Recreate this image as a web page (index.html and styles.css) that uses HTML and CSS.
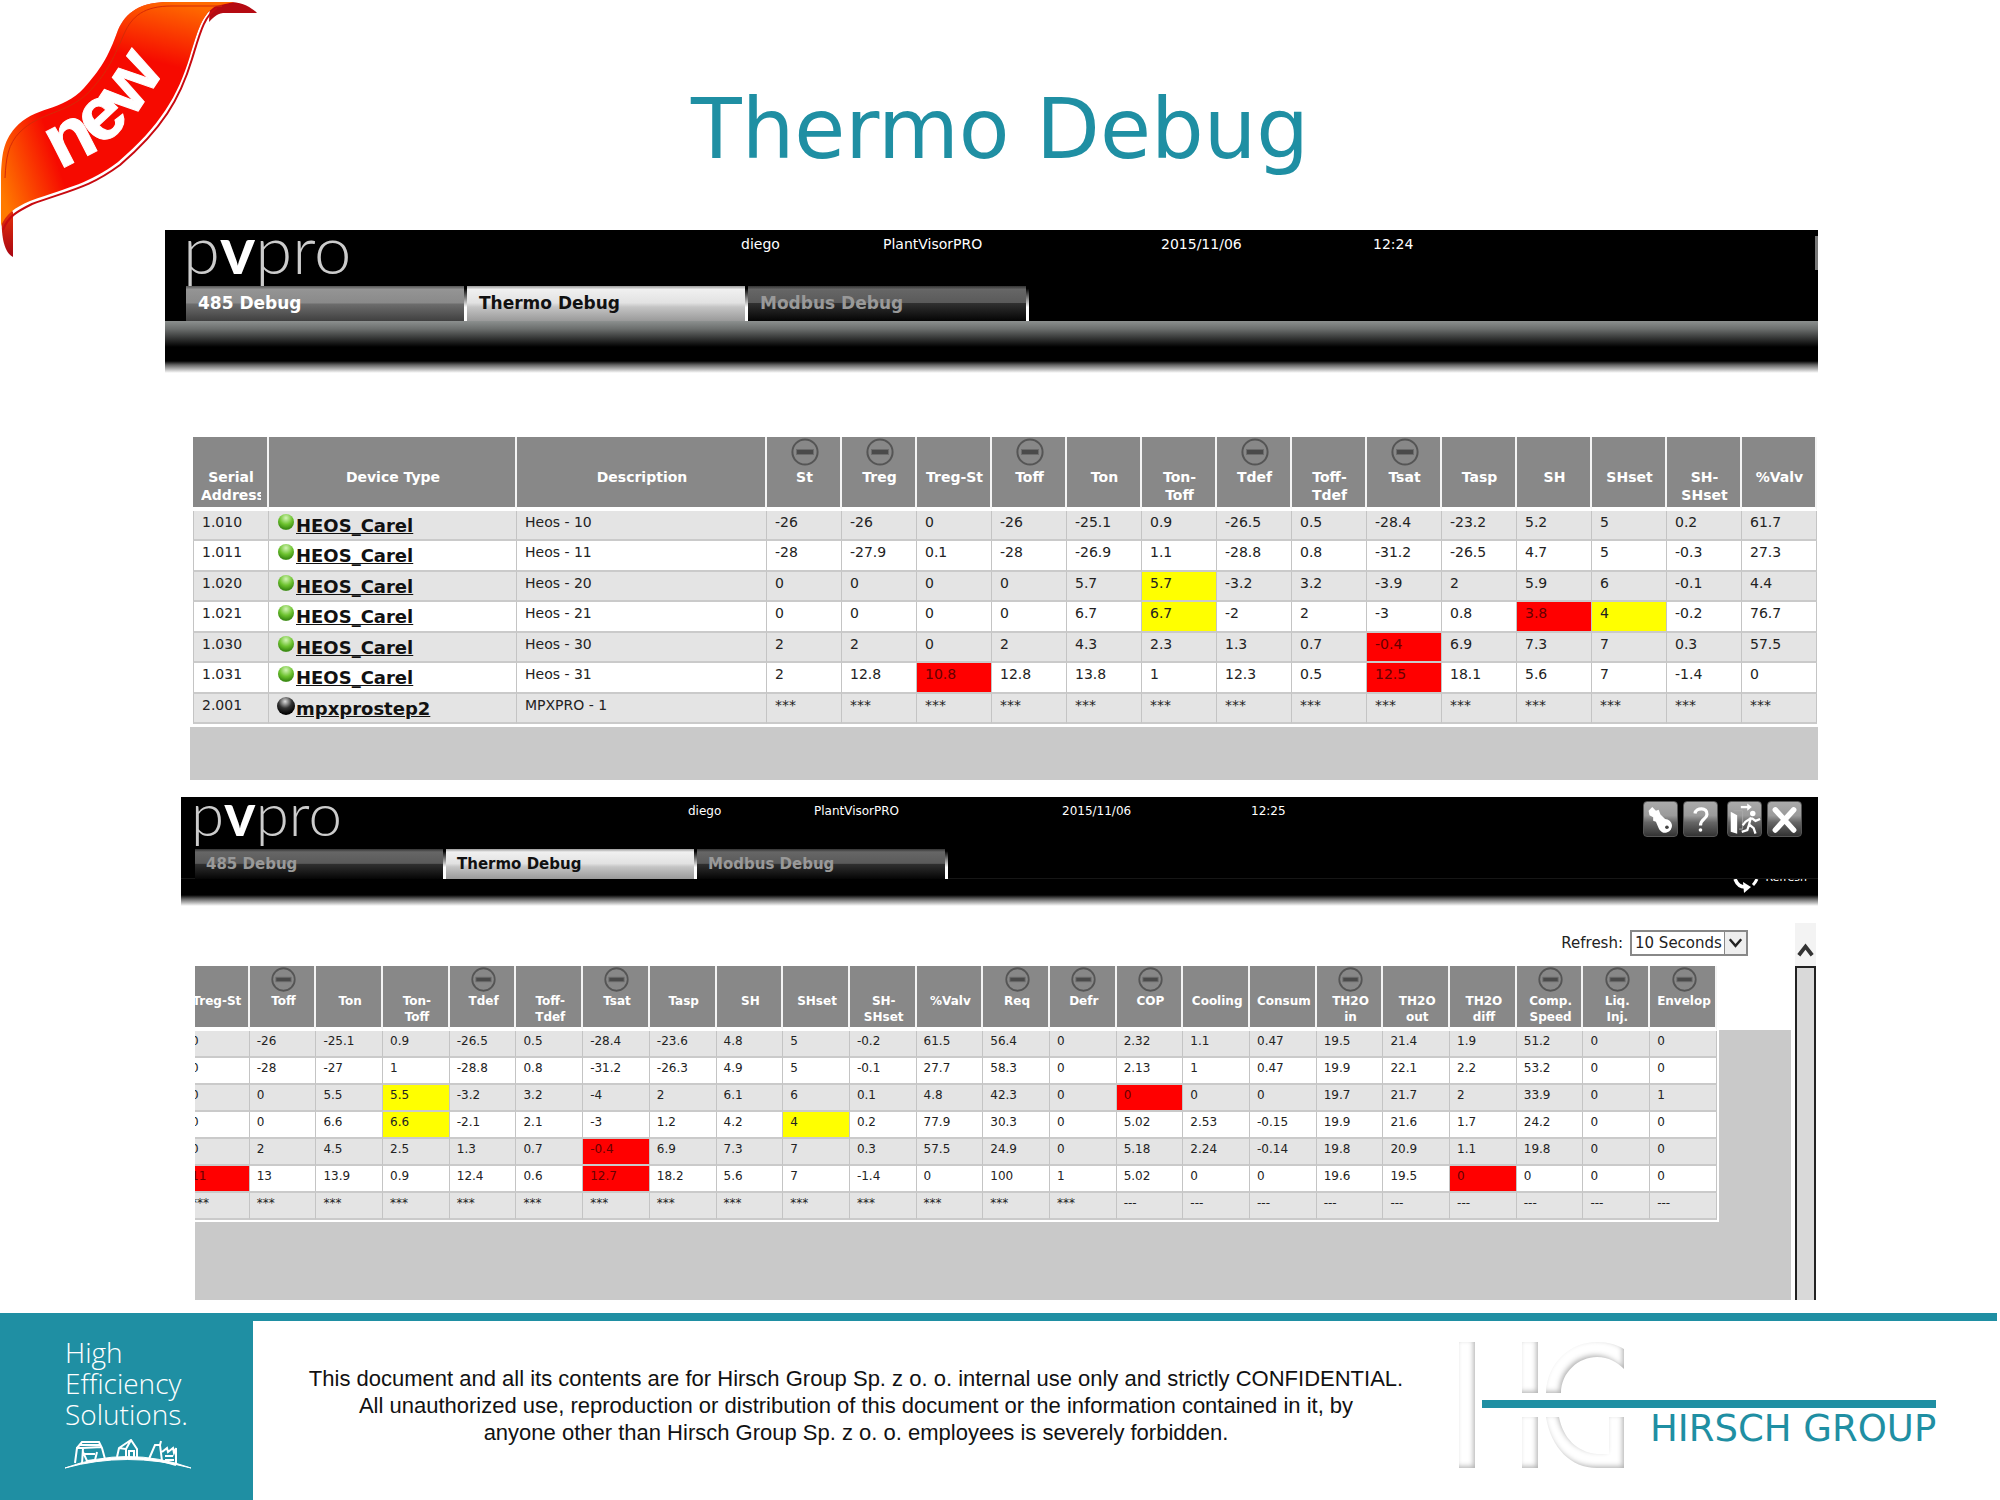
FILE: index.html
```html
<!DOCTYPE html>
<html lang="en">
<head>
<meta charset="utf-8">
<title>Thermo Debug</title>
<link rel="stylesheet" href="styles.css">
</head>
<body>
<svg class="defs" aria-hidden="true">
  <symbol id="minus" viewBox="0 0 28 28">
    <circle cx="14" cy="14" r="12.6" fill="none" stroke="#555" stroke-width="2"/>
    <rect x="5.500" y="11.500" width="17" height="5" fill="#4a4a4a" stroke="#6c6c6c"/>
  </symbol>
</svg>
<div class="slide">
  <svg class="ribbon" viewBox="0 0 260 260" role="img" aria-label="new">
    <defs>
      <linearGradient id="r1" gradientUnits="userSpaceOnUse" x1="0" y1="190" x2="60" y2="170">
        <stop offset="0" stop-color="#ff7a00"/><stop offset="1" stop-color="#f60a00"/>
      </linearGradient>
      <linearGradient id="r2" gradientUnits="userSpaceOnUse" x1="170" y1="0" x2="155" y2="62">
        <stop offset="0" stop-color="#ff6a00"/><stop offset="1" stop-color="#ff6a00" stop-opacity="0"/>
      </linearGradient>
      <linearGradient id="r3" x1="0" y1="0" x2="0" y2="1">
        <stop offset="0" stop-color="#f33a08"/><stop offset="1" stop-color="#a80612"/>
      </linearGradient>
    </defs>
    <path d="M2 200C0 238 4 252 13 257V212Z" fill="url(#r3)"/>
    <path d="M210 4L232 2C244 3 252 8 257 13H223C216 14 213 18 209 22Z" fill="#b50a12"/>
    <path d="M234 2L170 2C140 2 126 12 118 30C108 58 100 70 84 88C62 112 34 106 15 128C3 142 2 155 1 175V226C6 214 14 208 30 201C72 186 88 184 118 162C160 126 178 96 190 56C198 30 202 14 216 6Z" fill="url(#r1)"/>
    <path d="M234 2L170 2C140 2 126 12 118 30C108 58 100 70 84 88C62 112 34 106 15 128C3 142 2 155 1 175V226C6 214 14 208 30 201C72 186 88 184 118 162C160 126 178 96 190 56C198 30 202 14 216 6Z" fill="url(#r2)"/>
    <path d="M3 230C8 216 18 211 32 204C74 189 90 187 120 165C162 129 180 99 192 59C200 33 204 16 217 8" fill="none" stroke="#c80a10" stroke-width="2"/>
    <path d="M222 6H172C144 6 132 16 124 34C112 62 106 74 88 93C66 114 40 112 20 132C8 144 6 158 5 178" fill="none" stroke="#d62a06" stroke-width="1"/>
    <path id="curve" d="M59 168Q134 144 178 40" fill="none"/>
    <text class="ribbon-text"><textPath href="#curve">new</textPath></text>
  </svg>

  <h1>Thermo Debug</h1>

  <section class="app app-a">
    <header class="bar">
      <div class="bar-top">
        <div class="logo">p<b>v</b>pro</div>
        <span>diego</span><span>PlantVisorPRO</span><span>2015/11/06</span><span>12:24</span>
      </div>
      <nav class="tabs">
        <a href="#" class="tab hover">485 Debug</a>
        <a href="#" class="tab active">Thermo Debug</a>
        <a href="#" class="tab">Modbus Debug</a>
      </nav>
    </header>
    <div class="grid">
      <table>
        <colgroup><col class="c-serial"><col class="c-type"><col class="c-desc"><col span="14"></colgroup>
        <thead>
          <tr>
            <th><span>Serial<br>Address</span><th><span>Device Type</span><th><span>Description</span>
            <th class="c"><button aria-label="Hide St"><svg><use href="#minus"/></svg></button><span>St</span>
            <th class="c"><button aria-label="Hide Treg"><svg><use href="#minus"/></svg></button><span>Treg</span>
            <th><span>Treg-St</span>
            <th class="c"><button aria-label="Hide Toff"><svg><use href="#minus"/></svg></button><span>Toff</span>
            <th><span>Ton</span><th><span>Ton-<br>Toff</span>
            <th class="c"><button aria-label="Hide Tdef"><svg><use href="#minus"/></svg></button><span>Tdef</span>
            <th><span>Toff-<br>Tdef</span>
            <th class="c"><button aria-label="Hide Tsat"><svg><use href="#minus"/></svg></button><span>Tsat</span>
            <th><span>Tasp</span><th><span>SH</span><th><span>SHset</span><th><span>SH-<br>SHset</span><th><span>%Valv</span>
          </tr>
        </thead>
        <tbody>
          <tr><td>1.010<td class="dev"><i class="led"></i><a href="#">HEOS_Carel</a><td>Heos - 10<td>-26<td>-26<td>0<td>-26<td>-25.1<td>0.9<td>-26.5<td>0.5<td>-28.4<td>-23.2<td>5.2<td>5<td>0.2<td>61.7</tr>
          <tr><td>1.011<td class="dev"><i class="led"></i><a href="#">HEOS_Carel</a><td>Heos - 11<td>-28<td>-27.9<td>0.1<td>-28<td>-26.9<td>1.1<td>-28.8<td>0.8<td>-31.2<td>-26.5<td>4.7<td>5<td>-0.3<td>27.3</tr>
          <tr><td>1.020<td class="dev"><i class="led"></i><a href="#">HEOS_Carel</a><td>Heos - 20<td>0<td>0<td>0<td>0<td>5.7<td class="warn">5.7<td>-3.2<td>3.2<td>-3.9<td>2<td>5.9<td>6<td>-0.1<td>4.4</tr>
          <tr><td>1.021<td class="dev"><i class="led"></i><a href="#">HEOS_Carel</a><td>Heos - 21<td>0<td>0<td>0<td>0<td>6.7<td class="warn">6.7<td>-2<td>2<td>-3<td>0.8<td class="alarm">3.8<td class="warn">4<td>-0.2<td>76.7</tr>
          <tr><td>1.030<td class="dev"><i class="led"></i><a href="#">HEOS_Carel</a><td>Heos - 30<td>2<td>2<td>0<td>2<td>4.3<td>2.3<td>1.3<td>0.7<td class="alarm">-0.4<td>6.9<td>7.3<td>7<td>0.3<td>57.5</tr>
          <tr><td>1.031<td class="dev"><i class="led"></i><a href="#">HEOS_Carel</a><td>Heos - 31<td>2<td>12.8<td class="alarm">10.8<td>12.8<td>13.8<td>1<td>12.3<td>0.5<td class="alarm">12.5<td>18.1<td>5.6<td>7<td>-1.4<td>0</tr>
          <tr><td>2.001<td class="dev"><i class="led off"></i><a href="#">mpxprostep2</a><td>MPXPRO - 1<td>***<td>***<td>***<td>***<td>***<td>***<td>***<td>***<td>***<td>***<td>***<td>***<td>***<td>***</tr>
        </tbody>
      </table>
    </div>
  </section>

  <section class="app app-b">
    <header class="bar">
      <div class="bar-top">
        <div class="logo">p<b>v</b>pro</div>
        <span>diego</span><span>PlantVisorPRO</span><span>2015/11/06</span><span>12:25</span>
        <div class="tools">
          <button aria-label="Key"><svg viewBox="0 0 36 36"><path d="M5 9L9 5L13 9L16 8L18 13L23 18A7.500 7.500 0 1 1 16 28L13 21L10 20L10 16L6 14Z" fill="#fff"/><circle cx="25" cy="27" r="2" fill="#444"/></svg></button>
          <button aria-label="Help"><svg viewBox="0 0 36 36"><path d="M12 12C13 5 26 5 25 13C25 18 18 18 18 25" fill="none" stroke="#fff" stroke-width="3.500"/><circle cx="18" cy="30" r="2" fill="#fff"/></svg></button>
          <button class="exit" aria-label="Exit"><svg viewBox="0 0 36 36"><path d="M3 10L10 14V34L3 32Z" fill="#fff"/><path d="M6 9H16V29H12" fill="none" stroke="#aaa"/><path d="M14 5H23" stroke="#fff" stroke-width="2.500"/><path d="M21 1L26 5L21 9Z" fill="#fff"/><circle cx="27" cy="12" r="3" fill="#fff"/><path d="M25 16L23 24L28 28L30 34M23 24L21 30L15 32M25 17L19 21L16 25M26 17L30 20L35 18" fill="none" stroke="#fff" stroke-width="2.500"/></svg></button>
          <button aria-label="Close"><svg viewBox="0 0 36 36"><path d="M8 8L28 30M28 8L8 30" stroke="#fff" stroke-width="6" stroke-linecap="round"/></svg></button>
        </div>
      </div>
      <nav class="tabs">
        <a href="#" class="tab">485 Debug</a>
        <a href="#" class="tab active">Thermo Debug</a>
        <a href="#" class="tab">Modbus Debug</a>
      </nav>
      <button class="reload"><svg viewBox="0 0 26 14"><path d="M2 0C4 5 8 8 12 8" fill="none" stroke="#fff" stroke-width="3.500"/><path d="M10 3L18 8L11 14Z" fill="#fff"/><path d="M20 6C22 4 23 2 24 0" fill="none" stroke="#fff" stroke-width="3"/></svg><span>Refresh</span></button>
    </header>
    <div class="body">
      <div class="main">
        <div class="filter">
          <label for="rate">Refresh:</label>
          <div class="pick">
            <select id="rate"><option>10 Seconds</option></select>
            <svg viewBox="0 0 22 22" aria-hidden="true"><path d="M5 7L11 14L17 7" fill="none" stroke="#222" stroke-width="2.500"/></svg>
          </div>
        </div>
        <div class="grid">
          <table>
            <thead>
              <tr>
                <th><span>Treg-St</span>
                <th class="c"><button aria-label="Hide Toff"><svg><use href="#minus"/></svg></button><span>Toff</span>
                <th><span>Ton</span><th><span>Ton-<br>Toff</span>
                <th class="c"><button aria-label="Hide Tdef"><svg><use href="#minus"/></svg></button><span>Tdef</span>
                <th><span>Toff-<br>Tdef</span>
                <th class="c"><button aria-label="Hide Tsat"><svg><use href="#minus"/></svg></button><span>Tsat</span>
                <th><span>Tasp</span><th><span>SH</span><th><span>SHset</span><th><span>SH-<br>SHset</span><th><span>%Valv</span>
                <th class="c"><button aria-label="Hide Req"><svg><use href="#minus"/></svg></button><span>Req</span>
                <th class="c"><button aria-label="Hide Defr"><svg><use href="#minus"/></svg></button><span>Defr</span>
                <th class="c"><button aria-label="Hide COP"><svg><use href="#minus"/></svg></button><span>COP</span>
                <th><span>Cooling</span><th><span>Consum</span>
                <th class="c"><button aria-label="Hide TH2O in"><svg><use href="#minus"/></svg></button><span>TH2O<br>in</span>
                <th><span>TH2O<br>out</span><th><span>TH2O<br>diff</span>
                <th class="c"><button aria-label="Hide Comp. Speed"><svg><use href="#minus"/></svg></button><span>Comp.<br>Speed</span>
                <th class="c"><button aria-label="Hide Liq. Inj."><svg><use href="#minus"/></svg></button><span>Liq.<br>Inj.</span>
                <th class="c"><button aria-label="Hide Envelope"><svg><use href="#minus"/></svg></button><span>Envelope</span>
              </tr>
            </thead>
            <tbody>
              <tr><td>0<td>-26<td>-25.1<td>0.9<td>-26.5<td>0.5<td>-28.4<td>-23.6<td>4.8<td>5<td>-0.2<td>61.5<td>56.4<td>0<td>2.32<td>1.1<td>0.47<td>19.5<td>21.4<td>1.9<td>51.2<td>0<td>0</tr>
              <tr><td>0<td>-28<td>-27<td>1<td>-28.8<td>0.8<td>-31.2<td>-26.3<td>4.9<td>5<td>-0.1<td>27.7<td>58.3<td>0<td>2.13<td>1<td>0.47<td>19.9<td>22.1<td>2.2<td>53.2<td>0<td>0</tr>
              <tr><td>0<td>0<td>5.5<td class="warn">5.5<td>-3.2<td>3.2<td>-4<td>2<td>6.1<td>6<td>0.1<td>4.8<td>42.3<td>0<td class="alarm">0<td>0<td>0<td>19.7<td>21.7<td>2<td>33.9<td>0<td>1</tr>
              <tr><td>0<td>0<td>6.6<td class="warn">6.6<td>-2.1<td>2.1<td>-3<td>1.2<td>4.2<td class="warn">4<td>0.2<td>77.9<td>30.3<td>0<td>5.02<td>2.53<td>-0.15<td>19.9<td>21.6<td>1.7<td>24.2<td>0<td>0</tr>
              <tr><td>0<td>2<td>4.5<td>2.5<td>1.3<td>0.7<td class="alarm">-0.4<td>6.9<td>7.3<td>7<td>0.3<td>57.5<td>24.9<td>0<td>5.18<td>2.24<td>-0.14<td>19.8<td>20.9<td>1.1<td>19.8<td>0<td>0</tr>
              <tr><td class="alarm">11<td>13<td>13.9<td>0.9<td>12.4<td>0.6<td class="alarm">12.7<td>18.2<td>5.6<td>7<td>-1.4<td>0<td>100<td>1<td>5.02<td>0<td>0<td>19.6<td>19.5<td class="alarm">0<td>0<td>0<td>0</tr>
              <tr><td>***<td>***<td>***<td>***<td>***<td>***<td>***<td>***<td>***<td>***<td>***<td>***<td>***<td>***<td>---<td>---<td>---<td>---<td>---<td>---<td>---<td>---<td>---</tr>
            </tbody>
          </table>
        </div>
      </div>
      <div class="scroll">
        <button aria-label="Scroll up"><svg viewBox="0 0 22 22"><path d="M4 17L11 8L18 17" fill="none" stroke="#333" stroke-width="4"/></svg></button>
        <div class="thumb"></div>
      </div>
    </div>
  </section>

  <footer>
    <div class="brand">
      <p>High<br>Efficiency<br>Solutions.</p>
      <svg viewBox="0 0 126 30" aria-hidden="true">
        <g fill="none" stroke="#fff" stroke-width="2">
          <path d="M10 24L12 9L18 9L17 25M12 9L17 3L34 3L37 9L40 20M17 9L37 8M15 6H35M18 13L22 22L30 21L32 13M18 15H30"/>
          <path d="M52 18L54 9L66 1L72 10L72 19M54 9L61 10V18M61 10L66 1M64 18V12H69V18"/>
          <path d="M84 20L90 6H95L97 22M95 6L96 2M97 13L102 9L103 13L108 9L109 14L111 9V26M97 22L111 26M100 17H108M100 21H109"/>
        </g>
        <path d="M0 29Q62 6 126 29Q62 12 0 29Z" fill="#fff" stroke="#fff"/>
      </svg>
    </div>
    <p class="legal">This document and all its contents are for Hirsch Group Sp. z o. o. internal use only and strictly CONFIDENTIAL.<br>All unauthorized use, reproduction or distribution of this document or the information contained in it, by<br>anyone other than Hirsch Group Sp. z o. o. employees is severely forbidden.</p>
    <div class="group">
      <svg viewBox="0 0 480 130" aria-hidden="true">
        <filter id="emboss" x="-10%" y="-10%" width="120%" height="120%">
          <feFlood flood-color="#b4b4b4" result="f"/>
          <feComposite in="f" in2="SourceAlpha" operator="out" result="inv"/>
          <feGaussianBlur in="inv" stdDeviation="2.500" result="b"/>
          <feOffset in="b" dx="-2" dy="-2" result="o"/>
          <feComposite in="o" in2="SourceAlpha" operator="in" result="s"/>
          <feMerge><feMergeNode in="SourceGraphic"/><feMergeNode in="s"/></feMerge>
        </filter>
        <g filter="url(#emboss)" fill="#fff">
          <rect x="0" y="2" width="16" height="126"/>
          <rect x="63" y="2" width="16" height="51"/>
          <rect x="63" y="77" width="16" height="51"/>
          <path d="M87 53C88 22 112 2 138 2C150 2 158 5 165 9V29C158 22 150 17 138 17C120 17 102 32 102 53Z"/>
          <path d="M87 77C92 108 112 128 138 128H165V77H150V114H138C118 112 104 98 100 77Z"/>
        </g>
        <rect x="23" y="60" width="454" height="8" fill="#1f8fa3"/>
      </svg>
      <strong>HIRSCH GROUP</strong>
    </div>
  </footer>
</div>
</body>
</html>
```
FILE: styles.css
```css
* { box-sizing: border-box; }
body { margin: 0; background: #fff; font-family: "DejaVu Sans", Verdana, sans-serif; color: #222; }
button { padding: 0; border: 0; background: none; font: inherit; }
svg { display: block; }
.defs { position: absolute; width: 0; height: 0; }

.slide { position: relative; display: flex; flex-direction: column; min-height: 100vh; }
.ribbon { position: absolute; left: 0; top: 0; width: 260px; height: 260px; }
.ribbon-text { font: bold 76px "Liberation Sans", Arial, sans-serif; fill: #fff; stroke: #fff; stroke-width: 1px; }
h1 { margin: 0; height: 230px; padding-top: 82px; text-align: center; font-size: 83px; line-height: 96px; font-weight: 400; color: #1f8fa3; }

/* application windows */
.app-a { margin: 0 182px 17px 165px; }
.app-b { margin: 0 182px 13px 181px; }
.bar { position: relative; color: #fff; font-size: 14px; }
.app-a .bar { height: 143px; background: linear-gradient(#000 91px, #8c908f 91px, #6b6e6d 99px, #000 117px, #000 131px, #666 135px, #fff 143px); }
.app-a .bar::after { content: ""; position: absolute; right: 0; top: 6px; width: 3px; height: 34px; background: #777; }
.app-b .bar { height: 109px; font-size: 12px; background: linear-gradient(#000 81px, #161616 81px, #161616 82px, #000 82px, #000 98px, #666 102px, #fff 109px); }
.bar-top { display: grid; grid-template-columns: 576px 142px 278px 212px 1fr; height: 56px; line-height: 28px; }
.app-b .bar-top { grid-template-columns: 507px 126px 248px 189px 1fr auto; height: 52px; }
.logo { padding-left: 18px; font: 300 67px/36px Lato, sans-serif; height: 56px; color: #ccc; }
.logo b { font-weight: 700; color: #fff; }
.app-b .logo { padding-left: 10px; font-size: 60px; line-height: 32px; height: 50px; }

.tabs { display: flex; padding-left: 21px; }
.app-b .tabs { padding-left: 14px; }
.tab { width: 281px; height: 35px; padding-left: 12px; border: solid #eee; border-width: 0 3px 0 0; border-image: linear-gradient(#000 10%, #fff 60%) 1; font-size: 17px; line-height: 35px; font-weight: 700; text-decoration: none; color: #999; background: linear-gradient(#333, #666 10%, #5a5a5a 48%, #303030 50%, #050505); }
.app-b .tab { width: 251px; height: 30px; padding-left: 11px; font-size: 15px; line-height: 30px; }
.tab.hover { color: #fff; background: linear-gradient(#555, #949494 10%, #8a8a8a 48%, #6c6c6c 52%, #404040); }
.tab.active { color: #111; background: linear-gradient(#999, #f0f0f0 10%, #e2e2e2 48%, #c4c4c4 60%, #9a9a9a); }

.tools { display: flex; gap: 5px; padding: 4px 16px 0 0; }
.tools button { width: 35px; height: 36px; border-radius: 4px; border: 1px solid #555; background: linear-gradient(#aaa, #9a9a9a 40%, #666 60%, #333); }
.tools .exit { margin-left: 4px; }
.tools svg { width: 33px; height: 34px; }
.reload { position: absolute; right: 11px; top: 82px; display: flex; gap: 6px; height: 15px; overflow: hidden; color: #fff; font-size: 11px; line-height: 14px; }
.reload svg { width: 26px; height: 14px; }
.reload span { margin-top: -8px; }

/* data grids */
.app-a .grid { margin: 64px 0 0 25px; height: 343px; padding: 0 1px 0 3px; background: linear-gradient(#fff 290px, #c9c9c9 290px); }
table { width: 100%; table-layout: fixed; border-collapse: separate; border-spacing: 0; font-size: 14px; }
.c-serial { width: 76px; }
.c-type { width: 248px; }
.c-desc { width: 250px; }
th { height: 74px; padding: 31px 6px 0 8px; vertical-align: top; background: #888 padding-box; border-right: 2px solid #f4f4f4; border-bottom: 4px solid #fff; color: #fff; line-height: 18px; white-space: nowrap; }
th.c { padding-top: 1px; }
th span { display: block; overflow: hidden; }
th button { display: block; margin: 0 auto 2px; }
th button svg { width: 28px; height: 28px; }
td { height: 30px; padding: 3px 0 0 8px; vertical-align: top; line-height: 17px; border-right: 1px solid #c4c4c4; border-bottom: 2px solid #cacaca; white-space: nowrap; overflow: hidden; }
td:first-child { border-left: 1px solid #c4c4c4; }
.app-a tr:nth-child(even) td { height: 31px; }
tbody tr:nth-child(odd) td { background: #e4e4e4; }
tbody tr td.warn { background: #ff0; }
tbody tr td.alarm { background: #f00; color: #600; }
.dev { padding: 3px 0 0 9px; font-size: 18px; line-height: 24px; }
.dev a { color: #111; font-weight: 700; }
.led { float: left; width: 16px; height: 16px; margin-right: 2px; border-radius: 50%; background: radial-gradient(circle at 50% 25%, #d4f5b8, #6cc22e 45%, #3c8c14 75%, #9bc484); }
.led.off { width: 18px; height: 18px; margin: 0 1px 0 -1px; background: radial-gradient(circle at 45% 25%, #ddd, #333 40%, #000 75%); }

.body { display: flex; justify-content: space-between; gap: 4px; padding-right: 2px; }
.main { flex: 1; margin-left: 14px; }
.filter { display: flex; justify-content: flex-end; align-items: center; gap: 7px; padding: 23px 43px 10px 0; height: 60px; font-size: 15px; }
.pick { position: relative; }
.pick select { display: block; appearance: none; width: 118px; height: 26px; padding: 0 3px; border: 2px solid #888; border-radius: 0; background: #fff; font: 15px "DejaVu Sans", Verdana, sans-serif; color: #222; }
.pick svg { position: absolute; right: 2px; top: 2px; width: 22px; height: 22px; background: #eee; border-left: 1px solid #888; pointer-events: none; }
.app-b .grid { height: 334px; overflow: hidden; padding-right: 72px; background: linear-gradient(#fff 64px, #c9c9c9 64px); }
.app-b table { width: calc(100% + 12px); margin-left: -12px; font-size: 12px; border: solid #fff; border-width: 0 2px 2px 0; background: #fff; }
.app-b th { height: 65px; padding: 27px 4px 0 7px; line-height: 16px; }
.app-b th.c { padding-top: 1px; }
.app-b th button { margin-bottom: 1px; }
.app-b th button svg { width: 25px; height: 25px; }
.app-b td { height: 27px; line-height: 15px; padding-left: 7px; }
.scroll { display: flex; flex-direction: column; width: 21px; padding-top: 17px; }
.scroll button { height: 43px; background: #f3f3f3; display: flex; align-items: flex-end; padding-bottom: 6px; }
.scroll svg { width: 21px; height: 21px; }
.thumb { flex: 1; border: solid #222; border-width: 2px 2px 0; background: #d9d9d9; }

/* footer */
footer { flex: 1; display: flex; min-height: 187px; margin-right: 3px; background: linear-gradient(#1f8fa3 8px, #fff 8px); }
.brand { width: 253px; padding: 24px 0 0 65px; background: #1f8fa3; color: #fff; }
.brand p { margin: 0; font: 300 28px/31px "Open Sans", sans-serif; }
.brand svg { width: 126px; height: 30px; margin-top: 9px; }
.legal { flex: 1; margin: 0; padding: 52px 0 0; text-align: center; font: 22px/27px "Liberation Sans", Arial, sans-serif; color: #111; }
.group { width: 538px; padding-top: 27px; }
.group svg { width: 480px; height: 130px; }
.group strong { display: block; margin: -61px 0 0 191px; font-size: 37px; line-height: 40px; font-weight: 400; color: #1f8fa3; }
```
